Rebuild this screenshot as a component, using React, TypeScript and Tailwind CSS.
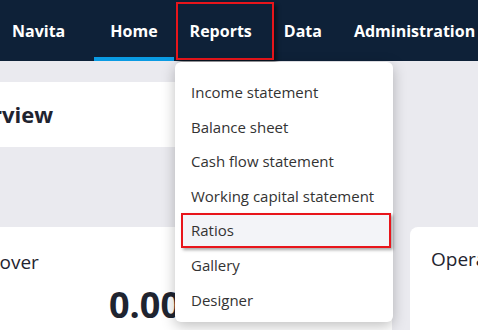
import { useState } from 'react';

const navItems = ['Home', 'Reports', 'Data', 'Administration'];

const reportLinks = [
  'Income statement',
  'Balance sheet',
  'Cash flow statement',
  'Working capital statement',
  'Ratios',
  'Gallery',
  'Designer',
];

export default function App() {
  const [active] = useState('Home');

  return (
    <div
      className="relative w-[478px] h-[330px] overflow-hidden bg-[#eaeaef]"
      style={{ fontFamily: '"Open Sans", "Noto Sans", sans-serif' }}
    >
      {/* top navigation */}
      <nav className="h-[61px] bg-[#0e2138] flex items-stretch text-white text-[16px] font-bold">
        <div className="flex items-center pl-[12px] pr-[29px]">Navita</div>
        {navItems.map((item) => (
          <div key={item} className="relative flex items-center px-[16px]">
            {item}
            {item === active && (
              <span className="absolute left-0 right-0 bottom-0 h-[4px] bg-[#0a9be3]" />
            )}
            {item === 'Reports' && (
              <span className="absolute left-[2px] -right-[6px] top-[2px] bottom-[1px] border-2 border-[#e8151b] shadow-[3px_3px_4px_rgba(0,0,0,0.45)]" />
            )}
          </div>
        ))}
      </nav>

      {/* page content, scrolled sideways */}
      <div className="-ml-[42px] flex flex-col">
        <div className="mt-[21px] h-[65px] w-[430px] bg-white flex items-center">
          <h1 className="-ml-[9px] text-[22px] font-bold text-[#1f2430]">Overview</h1>
        </div>

        <div className="mt-[80px] flex gap-[18px]">
          <div className="shrink-0 w-[434px] h-[120px] bg-white rounded-lg pt-[21px]">
            <div className="text-[19px] text-[#1f2430]">Turnover</div>
            <div className="mt-[10px] pl-[151px] text-[36px] font-bold text-[#1f2430] leading-none">0.00</div>
          </div>
          <div className="shrink-0 w-[200px] h-[120px] bg-white rounded-lg pt-[18px] pl-[21px]">
            <div className="text-[19px] text-[#1f2430]">Operating result</div>
          </div>
        </div>
      </div>

      {/* Reports dropdown */}
      <div className="absolute left-[175px] top-[62px] w-[218px] h-[260px] bg-white rounded-md shadow-[0_4px_14px_rgba(0,0,0,0.25)] pt-[13px] pb-[5px]">
        {reportLinks.map((link) => (
          <div key={link} className="relative h-[34.6px] flex items-center pl-[16px] text-[15px] text-[#333]">
            {link === 'Ratios' && (
              <span className="absolute left-[6px] right-[2px] top-0 bottom-0 bg-[#f3f4f8] border-2 border-[#e8151b] shadow-[2px_2px_3px_rgba(0,0,0,0.35)]" />
            )}
            <span className="relative">{link}</span>
          </div>
        ))}
      </div>
    </div>
  );
}
